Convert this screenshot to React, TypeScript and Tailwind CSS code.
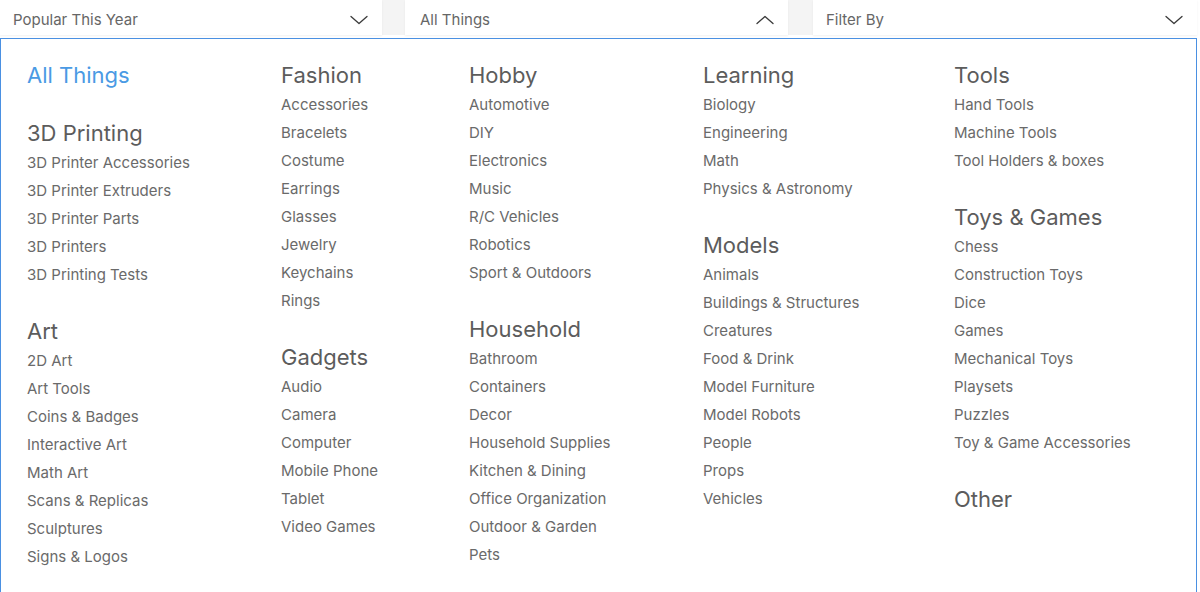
import React from 'react';

interface Group {
    title: string;
    items: string[];
    active?: boolean;
}

// Columns of the category menu, top to bottom
const columns: { width: string; groups: Group[] }[] = [
    {
        width: 'w-[254px]',
        groups: [
            { title: 'All Things', items: [], active: true },
            {
                title: '3D Printing',
                items: ['3D Printer Accessories', '3D Printer Extruders', '3D Printer Parts', '3D Printers', '3D Printing Tests']
            },
            {
                title: 'Art',
                items: ['2D Art', 'Art Tools', 'Coins & Badges', 'Interactive Art', 'Math Art', 'Scans & Replicas', 'Sculptures', 'Signs & Logos']
            }
        ]
    },
    {
        width: 'w-[188px]',
        groups: [
            { title: 'Fashion', items: ['Accessories', 'Bracelets', 'Costume', 'Earrings', 'Glasses', 'Jewelry', 'Keychains', 'Rings'] },
            { title: 'Gadgets', items: ['Audio', 'Camera', 'Computer', 'Mobile Phone', 'Tablet', 'Video Games'] }
        ]
    },
    {
        width: 'w-[234px]',
        groups: [
            { title: 'Hobby', items: ['Automotive', 'DIY', 'Electronics', 'Music', 'R/C Vehicles', 'Robotics', 'Sport & Outdoors'] },
            {
                title: 'Household',
                items: ['Bathroom', 'Containers', 'Decor', 'Household Supplies', 'Kitchen & Dining', 'Office Organization', 'Outdoor & Garden', 'Pets']
            }
        ]
    },
    {
        width: 'w-[251px]',
        groups: [
            { title: 'Learning', items: ['Biology', 'Engineering', 'Math', 'Physics & Astronomy'] },
            {
                title: 'Models',
                items: ['Animals', 'Buildings & Structures', 'Creatures', 'Food & Drink', 'Model Furniture', 'Model Robots', 'People', 'Props', 'Vehicles']
            }
        ]
    },
    {
        width: 'w-[220px]',
        groups: [
            { title: 'Tools', items: ['Hand Tools', 'Machine Tools', 'Tool Holders & boxes'] },
            {
                title: 'Toys & Games',
                items: ['Chess', 'Construction Toys', 'Dice', 'Games', 'Mechanical Toys', 'Playsets', 'Puzzles', 'Toy & Game Accessories']
            },
            { title: 'Other', items: [] }
        ]
    }
];

const Chevron = ({ up = false }: { up?: boolean }) => (
    <svg width="18" height="10" viewBox="0 0 18 10" fill="none" className="shrink-0">
        <path
            d={up ? 'M1 8.5L9 1.5L17 8.5' : 'M1 1.5L9 8.5L17 1.5'}
            stroke="#3a3a3a"
            strokeWidth="1.3"
            strokeLinecap="round"
            strokeLinejoin="round"
        />
    </svg>
);

const SelectBox = ({ label, open = false, className }: { label: string; open?: boolean; className: string }) => (
    <div className={`h-full bg-white flex items-center justify-between pt-[5px] pr-[14px] shadow-[0_1px_2px_rgba(0,0,0,0.06)] ${className}`}>
        <span className="text-[15px] text-[#666666]">{label}</span>
        <Chevron up={open} />
    </div>
);

export default function App() {
    return (
        <div className="w-[1200px] h-[592px] bg-white overflow-hidden" style={{ fontFamily: 'Inter, "Open Sans", sans-serif' }}>
            {/* Filter bar */}
            <div className="w-[1197px] h-[35px] flex bg-[#f4f4f4]">
                <SelectBox label="Popular This Year" className="w-[382px] pl-[13px]" />
                <SelectBox label="All Things" open className="w-[383px] ml-[23px] pl-[15px]" />
                <SelectBox label="Filter By" className="flex-1 ml-[25px] pl-[13px]" />
            </div>

            {/* Category panel */}
            <div className="mt-[3px] w-[1197px] border-[1.5px] border-[#4a90e2] pt-5 pl-[26px] pb-8 flex">
                {columns.map((col, ci) => (
                    <div key={ci} className={`${col.width} shrink-0 flex flex-col gap-[26px]`}>
                        {col.groups.map(g => (
                            <div key={g.title} className="flex flex-col">
                                <div className={`h-8 flex items-center text-[22px] ${g.active ? 'text-[#4a9ae4]' : 'text-[#5c5c5c]'}`}>
                                    {g.title}
                                </div>
                                {g.items.map(it => (
                                    <div key={it} className="h-7 flex items-center pt-px text-[15px] text-[#6a6a6a]">
                                        {it}
                                    </div>
                                ))}
                            </div>
                        ))}
                    </div>
                ))}
            </div>
        </div>
    );
}
